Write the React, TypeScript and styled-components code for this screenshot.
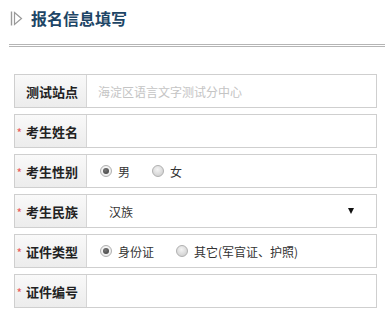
import React from "react";
import styled, { createGlobalStyle } from "styled-components";

const Global = createGlobalStyle`
  html, body { margin: 0; padding: 0; background: #fff; }
  body { font-family: "Noto Sans CJK SC", "Liberation Sans", sans-serif; color: #333; }
`;

const Page = styled.div`
  width: 385px;
  padding-top: 10px;
`;

const Header = styled.div`
  display: flex;
  align-items: center;
  gap: 8px;
  padding-left: 10px;
  height: 17px;
`;

const Title = styled.h1`
  margin: 0;
  font-size: 16px;
  line-height: 17px;
  font-weight: bold;
  color: #1d4566;
`;

const Separator = styled.div`
  margin: 17px 0 0 9px;
  height: 1px;
  border-top: 1px solid #b5b5b5;
  border-bottom: 1px solid #b5b5b5;
`;

const Form = styled.div`
  display: flex;
  flex-direction: column;
  gap: 6px;
  margin: 27px 0 0 14px;
  width: 363px;
`;

const Row = styled.div`
  display: flex;
  height: 34px;
  box-sizing: border-box;
  border: 1px solid #cfcfcf;
`;

const Label = styled.div`
  width: 72px;
  flex: none;
  box-sizing: border-box;
  display: flex;
  align-items: center;
  justify-content: flex-end;
  padding-right: 8px;
  background: linear-gradient(#f9f9f9, #ececec);
  border-right: 1px solid #d6d6d6;
  font-size: 13px;
  font-weight: bold;
  color: #222;
  gap: 4px;
`;

const Star = styled.span`
  color: #e85a5a;
  font-weight: normal;
  font-size: 12px;
  margin-top: 2px;
`;

const Cell = styled.div<{ $pad?: number }>`
  flex: 1;
  display: flex;
  align-items: center;
  padding-left: ${(p) => p.$pad ?? 11}px;
  font-size: 12px;
  color: #333;
`;

const Placeholder = styled.span`
  color: #c4c4c4;
`;

const Option = styled.label`
  display: flex;
  align-items: center;
  gap: 6px;
  margin-right: 22px;
`;

const RadioDot = styled.span<{ $on?: boolean }>`
  width: 12px;
  height: 12px;
  box-sizing: border-box;
  border-radius: 50%;
  border: 1px solid #b0b0b0;
  background: ${(p) =>
    p.$on
      ? "radial-gradient(circle at 50% 40%, #ffffff, #e4e4e4)"
      : "radial-gradient(circle at 45% 35%, #f4f4f4, #c8c8c8)"};
  display: flex;
  align-items: center;
  justify-content: center;
  &::after {
    content: "";
    display: ${(p) => (p.$on ? "block" : "none")};
    width: 6px;
    height: 6px;
    border-radius: 50%;
    background: radial-gradient(circle at 40% 35%, #777, #3a3a3a);
  }
`;

const SelectBox = styled.div`
  width: 245px;
  display: flex;
  align-items: center;
  justify-content: space-between;
`;

const Caret = styled.span`
  width: 0;
  height: 0;
  border-left: 3px solid transparent;
  border-right: 3px solid transparent;
  border-top: 6px solid #111;
`;

const Icon = () => (
  <svg width="13" height="15" viewBox="0 0 13 15">
    <line x1="1.5" y1="0.5" x2="1.5" y2="14.5" stroke="#9a9a9a" strokeWidth="1.4" />
    <path d="M4.5 1.5 L11.5 7.5 L4.5 13.5 Z" fill="#fff" stroke="#9a9a9a" strokeWidth="1.2" />
  </svg>
);

const Radio = ({ on, text }: { on?: boolean; text: string }) => (
  <Option>
    <RadioDot $on={on} />
    {text}
  </Option>
);

export default function App() {
  return (
    <Page>
      <Global />
      <Header>
        <Icon />
        <Title>报名信息填写</Title>
      </Header>
      <Separator />
      <Form>
        <Row>
          <Label>测试站点</Label>
          <Cell>
            <Placeholder>海淀区语言文字测试分中心</Placeholder>
          </Cell>
        </Row>
        <Row>
          <Label>
            <Star>*</Star>考生姓名
          </Label>
          <Cell />
        </Row>
        <Row>
          <Label>
            <Star>*</Star>考生性别
          </Label>
          <Cell $pad={13}>
            <Radio on text="男" />
            <Radio text="女" />
          </Cell>
        </Row>
        <Row>
          <Label>
            <Star>*</Star>考生民族
          </Label>
          <Cell $pad={22}>
            <SelectBox>
              汉族
              <Caret />
            </SelectBox>
          </Cell>
        </Row>
        <Row>
          <Label>
            <Star>*</Star>证件类型
          </Label>
          <Cell $pad={13}>
            <Radio on text="身份证" />
            <Radio text="其它(军官证、护照)" />
          </Cell>
        </Row>
        <Row>
          <Label>
            <Star>*</Star>证件编号
          </Label>
          <Cell />
        </Row>
      </Form>
    </Page>
  );
}
